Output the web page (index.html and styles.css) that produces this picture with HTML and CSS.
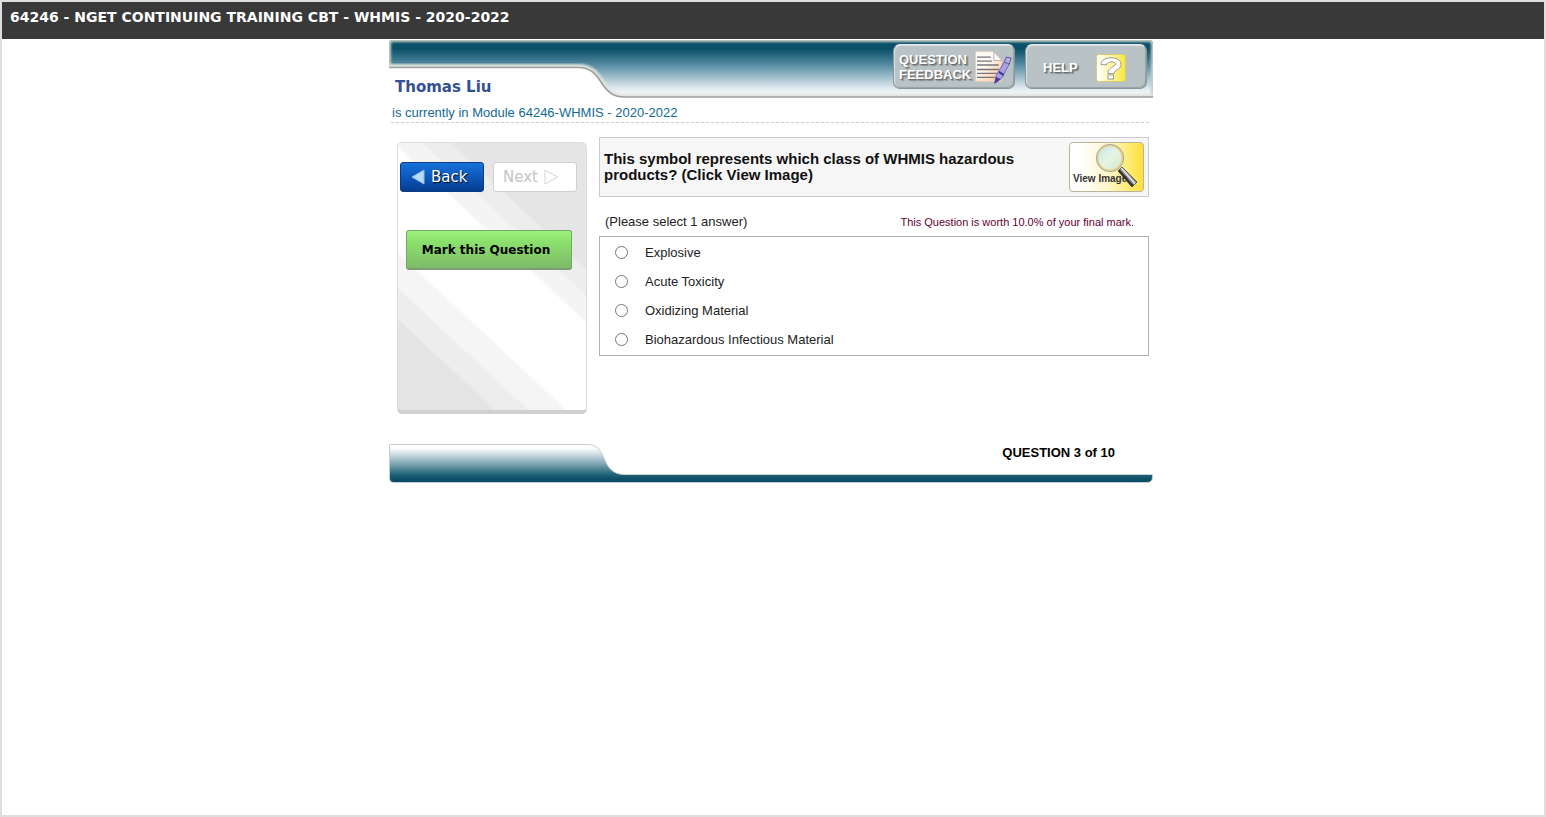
FILE: index.html
```html
<!DOCTYPE html>
<html lang="en">
<head>
<meta charset="utf-8">
<title>64246 - NGET CONTINUING TRAINING CBT - WHMIS - 2020-2022</title>
<link rel="stylesheet" href="styles.css">
</head>
<body>
<header class="titlebar"><h1 class="titlebar-text">64246 - NGET CONTINUING TRAINING CBT - WHMIS - 2020-2022</h1></header>
<div class="module">
  <div class="banner">
    <svg class="banner-art" viewBox="0 0 764 59" preserveAspectRatio="none" aria-hidden="true">
      <defs>
        <linearGradient id="bannerFill" x1="0" y1="0" x2="0" y2="1">
          <stop offset="0" stop-color="#0a5068"/>
          <stop offset=".15" stop-color="#0a5068"/>
          <stop offset=".42" stop-color="#5389a0"/>
          <stop offset=".68" stop-color="#adc8d4"/>
          <stop offset=".85" stop-color="#e4ebf2"/>
          <stop offset="1" stop-color="#ffffff"/>
        </linearGradient>
        <filter id="soft" x="-2%" y="-10%" width="104%" height="120%"><feGaussianBlur stdDeviation="1"/></filter>
        <clipPath id="bannerClip"><path d="M0 4Q0 0 4 0H760Q764 0 764 4V58H236C208 58 216 28 189 28H0Z"/></clipPath>
      </defs>
      <g clip-path="url(#bannerClip)">
        <path d="M0 0H764V58H236C208 58 216 28 189 28H0Z" fill="url(#bannerFill)"/>
        <path d="M0 29V4Q0 0 4 0H760Q764 0 764 4V59" fill="none" stroke="#c3cdc3" stroke-width="4" filter="url(#soft)"/>
        <path d="M0 26H189C217 26 209 56 236 56H764" fill="none" stroke="#dfe4dd" stroke-width="4" filter="url(#soft)"/>
      </g>
      <path d="M0 27.500H189C216 27.500 208 57 236 57H764" fill="none" stroke="#a0a0a0" stroke-width="1.700"/>
    </svg>
    <h2 class="student">Thomas Liu</h2>
    <div class="tools">
      <button class="tool tool-feedback" type="button">
        <span>QUESTION<br>FEEDBACK</span>
        <svg width="40" height="36" viewBox="0 0 40 36" aria-hidden="true">
          <defs><linearGradient id="paper" x1="0" x2="1" y1="0" y2="1"><stop offset=".4" stop-color="#fffaf4"/><stop offset="1" stop-color="#fbb98a"/></linearGradient></defs>
          <path d="M1.500 2.500H20l8 8v22H1.500Z" fill="url(#paper)" stroke="#e0cdbb"/>
          <path d="M20 2.500v9h8Z" fill="#fff" stroke="#b5b0b0"/>
          <path d="M3 8H17M3 12H18M3 16H25M3 20.500H25M3 24.500H23M3 28.500H21" stroke="#77757c" stroke-width="1.300"/>
          <path d="M31 12l5 2-8 15-6 5 0-7Z" fill="#a9a0e0" stroke="#7068b8"/>
          <path d="M32.500 8l5 1-2 6-5-2Z" fill="#b5ade0" stroke="#6058a0"/>
          <path d="M22 28l5 2-7 5ZM25.500 22l5 3-1 2-5-3Z" fill="#443c98"/>
        </svg>
      </button>
      <button class="tool tool-help" type="button">
        <span>HELP</span>
        <svg width="30" height="28" viewBox="0 0 30 28" aria-hidden="true">
          <defs><linearGradient id="helpFill"><stop offset=".1" stop-color="#fffef4"/><stop offset="1" stop-color="#f8e83a"/></linearGradient></defs>
          <rect x=".5" y=".5" width="29" height="27" rx="2" fill="url(#helpFill)" stroke="#d8cc70"/>
          <path d="M5 10.500C5 1.500 25 1.500 25 10.500C25 16 18 15.500 18 19.500H12C11.500 13 19.500 13 19.500 10C19.500 7 10.500 7 10.500 11Z" fill="#fff" stroke="#999"/>
          <rect x="12" y="21" width="5.500" height="4" fill="#fff" stroke="#999"/>
        </svg>
      </button>
    </div>
  </div>
  <p class="status">is currently in Module 64246-WHMIS - 2020-2022</p>
  <main class="columns">
    <aside class="panel">
      <nav class="pager">
        <button class="nav-btn nav-back" type="button">
          <svg width="14" height="16" viewBox="0 0 14 16" aria-hidden="true"><path d="M13 1V15L1 8Z" fill="#b8dcf4" stroke="#8fbde4"/></svg>
          <span>Back</span>
        </button>
        <button class="nav-btn nav-next" type="button" disabled>
          <span>Next</span>
          <svg width="15" height="16" viewBox="0 0 15 16" aria-hidden="true"><path d="M1 1V15L13.500 8Z" fill="#fff" stroke="#d4d4d4"/></svg>
        </button>
      </nav>
      <button class="mark" type="button">Mark this Question</button>
    </aside>
    <form class="question">
      <div class="prompt">
        <p class="prompt-text">This symbol represents which class of WHMIS hazardous products? (Click View Image)</p>
        <button class="view-image" type="button">
          <svg class="lens" width="48" height="48" viewBox="0 0 48 48" aria-hidden="true">
            <defs>
              <linearGradient id="glass" x1="0" y1="0" x2="1" y2="1"><stop offset="0" stop-color="#bfe6ea"/><stop offset=".5" stop-color="#e8f4e4"/><stop offset="1" stop-color="#cfe8c8"/></linearGradient>
              <linearGradient id="handle" gradientUnits="userSpaceOnUse" x1="29" y1="38" x2="37" y2="31"><stop offset="0" stop-color="#111"/><stop offset=".35" stop-color="#333"/><stop offset=".6" stop-color="#eee"/><stop offset=".85" stop-color="#555"/></linearGradient>
            </defs>
            <path d="M23 28L27 24L42 39L37 44Z" fill="url(#handle)" stroke="#444" stroke-width=".8"/>
            <circle cx="15" cy="15" r="12.500" fill="url(#glass)" stroke="#e8cf8c" stroke-width="2"/>
            <circle cx="15" cy="15" r="13.700" fill="none" stroke="#8d9a9a" stroke-width=".8"/>
          </svg>
          <span class="view-label">View Image</span>
        </button>
      </div>
      <div class="hints">
        <p class="hint">(Please select 1 answer)</p>
        <p class="worth">This Question is worth 10.0% of your final mark.</p>
      </div>
      <div class="answers" role="radiogroup" aria-label="Answers">
        <label class="answer"><input type="radio" name="answer" class="radio"><span>Explosive</span></label>
        <label class="answer"><input type="radio" name="answer" class="radio"><span>Acute Toxicity</span></label>
        <label class="answer"><input type="radio" name="answer" class="radio"><span>Oxidizing Material</span></label>
        <label class="answer"><input type="radio" name="answer" class="radio"><span>Biohazardous Infectious Material</span></label>
      </div>
    </form>
  </main>
  <footer class="foot">
    <svg class="foot-art" viewBox="0 0 764 39" preserveAspectRatio="none" aria-hidden="true">
      <defs>
        <linearGradient id="footFill" x1="0" y1="0" x2="0" y2="1">
          <stop offset="0" stop-color="#ffffff"/>
          <stop offset=".1" stop-color="#fafcfd"/>
          <stop offset=".22" stop-color="#d9e4ea"/>
          <stop offset=".5" stop-color="#82a8b6"/>
          <stop offset=".75" stop-color="#2a6c7e"/>
          <stop offset=".9" stop-color="#0c5069"/>
          <stop offset="1" stop-color="#074a66"/>
        </linearGradient>
      </defs>
      <path d="M.5 .5H199C220 .5 210 30.500 236 30.500H763.500V33Q763.500 38.500 758 38.500H5Q.5 38.500 .5 34Z" fill="url(#footFill)" stroke="#c8ced0"/>
    </svg>
    <p class="progress">QUESTION 3 of 10</p>
  </footer>
</div>
</body>
</html>
```
FILE: styles.css
```css
* { box-sizing: border-box; }
body {
  margin: 0;
  min-height: 100vh;
  border: 2px solid #dedede;
  background: #fff;
  color: #222;
  font: 13px/16px "Liberation Sans", Arial, sans-serif;
}
h1, h2, p { margin: 0; }
button { font: inherit; padding: 0; cursor: pointer; }
.titlebar { background: #393939; padding: 7px 8px 14px; }
.titlebar-text { color: #fff; font: bold 14px/16px "DejaVu Sans", Verdana, sans-serif; }
.module { max-width: 768px; margin: 1px auto 0; padding-right: 4px; }
.banner {
  position: relative;
  display: flex;
  justify-content: space-between;
  align-items: flex-start;
  height: 59px;
  padding: 4px 6px 0;
}
.banner-art { position: absolute; top: 0; left: 0; width: 100%; height: 59px; }
.student {
  position: relative;
  padding-top: 33px;
  color: #34508f;
  font: bold 15px/20px "DejaVu Sans", Verdana, sans-serif;
}
.tools { position: relative; display: flex; gap: 10px; }
.tool {
  display: flex;
  align-items: center;
  width: 122px;
  height: 45px;
  border: 1px solid #8b9699;
  border-top-color: #e6eaea;
  border-radius: 7px;
  background: #b9c3c5;
  box-shadow: inset 1px 1px 1px #dce2e2, inset -1px -1px 1px #98a3a5;
  color: #fff;
  font-weight: bold;
  line-height: 15px;
  text-align: left;
  text-shadow: 1px 1px 1px #666, 2px 2px 1px #8b9294;
}
.tool-feedback { padding-left: 5px; gap: 3px; }
.tool-help { padding: 2px 0 0 17px; gap: 18px; }
.status {
  margin: 0 4px 0 2px;
  padding: 6px 0 1px 1px;
  border-bottom: 1px dashed #ccc;
  color: #136a92;
}
.columns { display: flex; align-items: flex-start; gap: 12px; padding: 14px 4px 0 8px; }
.panel {
  flex: none;
  width: 190px;
  min-height: 272px;
  margin-top: 5px;
  padding: 19px 2px;
  border: 1px solid #ddd;
  border-bottom: 4px solid #d0d0d0;
  border-radius: 5px;
  background: linear-gradient(43deg, #e4e4e4 0 20%, #ededed 21% 27%, #f5f5f5 28% 35%, #fff 36% 59%, #f4f4f4 60% 65%, #ededed 66% 71%, #e5e5e5 72%);
}
.pager { display: flex; gap: 9px; }
.nav-btn {
  display: flex;
  align-items: center;
  gap: 6px;
  width: 84px;
  height: 30px;
  border-radius: 3px;
  font: 15px/20px "DejaVu Sans", Verdana, sans-serif;
}
.nav-back {
  padding-left: 10px;
  border: 1px solid #0b3d86;
  background: linear-gradient(#1672dc, #0c58ba 50%, #053d91);
  color: #fff;
  text-shadow: 1px 1px 1px #012;
}
.nav-next { padding-left: 9px; border: 1px solid #d0d0d0; background: #fff; color: #c4c4c4; }
.mark {
  display: block;
  width: 166px;
  height: 40px;
  margin: 38px 0 0 6px;
  padding-right: 6px;
  border: 1px solid #73a864;
  border-bottom: 2px solid #7c9c72;
  border-radius: 3px;
  background: linear-gradient(#a0f280, #8ce36d 25%, #7dbb69);
  color: #000;
  font: bold 12px/16px "DejaVu Sans", Verdana, sans-serif;
}
.question { flex: 1; min-width: 0; }
.prompt {
  display: flex;
  align-items: center;
  height: 60px;
  padding: 0 4px;
  border: 1px solid #ccc;
  background: #f6f6f6;
}
.prompt-text { flex: 1; color: #111; font-size: 15px; font-weight: bold; }
.view-image {
  position: relative;
  flex: none;
  width: 75px;
  height: 50px;
  border: 1px solid #b9b49a;
  border-radius: 4px;
  background: linear-gradient(90deg, #fff 15%, #fff6c4 55%, #ffe03a);
}
.lens { position: absolute; top: 0; right: 0; }
.view-label {
  position: absolute;
  left: 3px;
  bottom: 4px;
  color: #333;
  font: bold 10px/16px "Liberation Sans", Arial, sans-serif;
  white-space: nowrap;
}
.hints { display: flex; justify-content: space-between; padding: 17px 15px 6px 6px; }
.worth { color: #603; font-size: 11px; }
.answers { padding: 1px 0; border: 1px solid #b0b0b0; }
.answer { display: flex; align-items: center; gap: 17px; height: 29px; padding-left: 15px; }
.radio { width: 13px; height: 13px; margin: 0; }
.foot { position: relative; height: 39px; margin-top: 30px; }
.foot-art { position: absolute; top: 0; left: 0; width: 100%; height: 39px; }
.progress {
  position: relative;
  padding: 1px 38px 0 0;
  color: #000;
  font-weight: bold;
  text-align: right;
}
```
